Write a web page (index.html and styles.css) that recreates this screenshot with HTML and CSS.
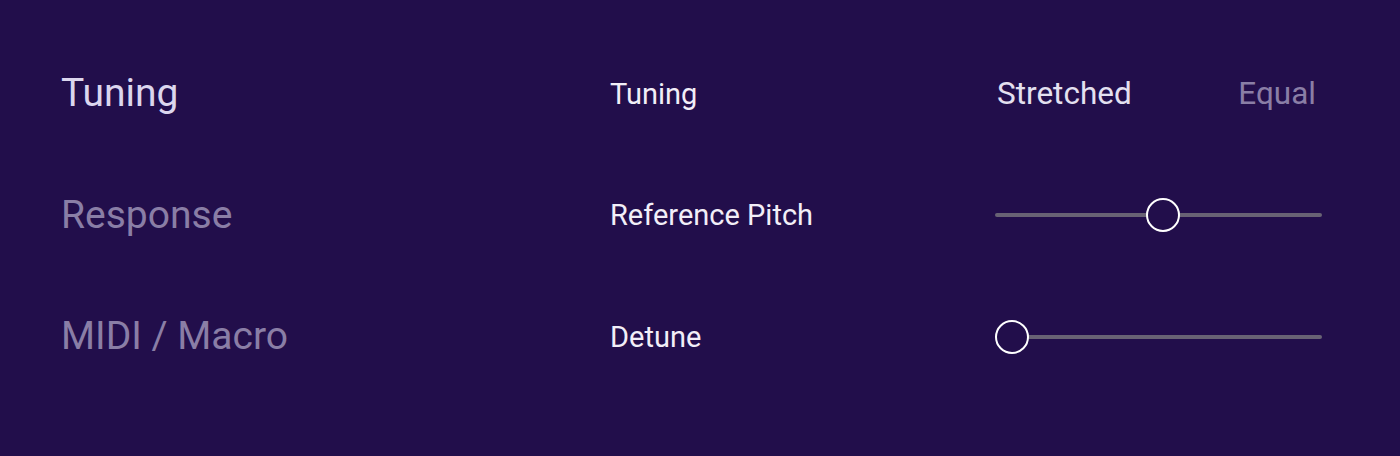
FILE: index.html
```html
<!DOCTYPE html>
<html lang="en">
  <head>
    <meta charset="UTF-8" />
    <title>Settings</title>
    <link rel="stylesheet" href="styles.css">
  </head>
  <body>
    <div class="settings">
      <nav class="side-nav">
        <div class="nav-item selected">Tuning</div>
        <div class="nav-item">Response</div>
        <div class="nav-item">MIDI / Macro</div>
      </nav>

      <div class="params">
        <div class="param-row">
          <span class="param-label">Tuning</span>
          <div class="toggle">
            <span class="toggle-option selected">Stretched</span>
            <span class="toggle-option">Equal</span>
          </div>
        </div>
        <div class="param-row">
          <span class="param-label">Reference Pitch</span>
          <div class="slider">
            <div class="slider-track"></div>
            <div class="slider-thumb" style="left: 46.2%"></div>
          </div>
        </div>
        <div class="param-row">
          <span class="param-label">Detune</span>
          <div class="slider">
            <div class="slider-track"></div>
            <div class="slider-thumb" style="left: 0%"></div>
          </div>
        </div>
      </div>
    </div>
  </body>
</html>
```

FILE: styles.css
```css
:root {
  --bg: #220e4b;
  --text-bright: #f2eef8;
  --text-dim: #8a7ea6;
  --track: #686274;
}

* {
  margin: 0;
  padding: 0;
  box-sizing: border-box;
}

body {
  width: 1400px;
  height: 456px;
  background-color: var(--bg);
  font-family: Roboto, "Noto Sans", sans-serif;
  overflow: hidden;
}

.settings {
  display: flex;
  padding: 33px 0 0 61px;
}

.side-nav {
  width: 549px;
  display: flex;
  flex-direction: column;
}

.nav-item {
  height: 121.5px;
  line-height: 121.5px;
  font-size: 39px;
  color: var(--text-dim);
}

.nav-item.selected {
  color: #dcd6ee;
}

.params {
  display: flex;
  flex-direction: column;
}

.param-row {
  height: 121.5px;
  display: flex;
  align-items: center;
}

.param-label {
  width: 385px;
  font-size: 29px;
  color: var(--text-bright);
}

.toggle {
  width: 327px;
  display: flex;
  justify-content: space-between;
  padding: 0 6px 0 2px;
  font-size: 31.5px;
}

.toggle-option {
  color: var(--text-dim);
}

.toggle-option.selected {
  color: #e4e0f0;
}

.slider {
  position: relative;
  width: 327px;
  height: 34px;
  display: flex;
  align-items: center;
}

.slider-track {
  width: 100%;
  height: 4px;
  border-radius: 2px;
  background-color: var(--track);
}

.slider-thumb {
  position: absolute;
  top: 0;
  width: 34px;
  height: 34px;
  border: 2px solid #ffffff;
  border-radius: 50%;
  background-color: var(--bg);
}
```
